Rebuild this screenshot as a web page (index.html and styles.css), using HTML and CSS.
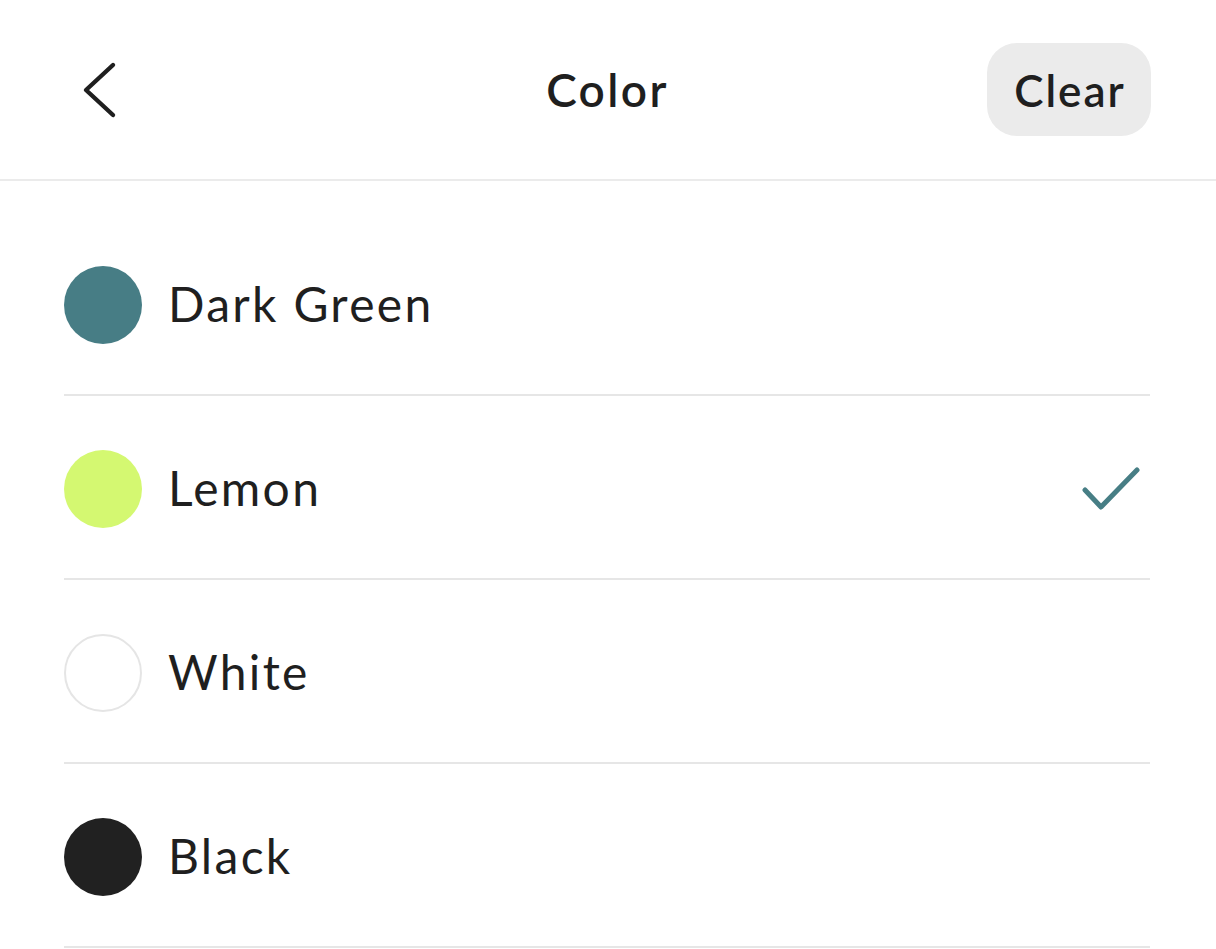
FILE: index.html
```html
<!DOCTYPE html>
<html lang="en">
<head>
<meta charset="utf-8">
<title>Color</title>
<link rel="stylesheet" href="styles.css">
</head>
<body>
<header class="topbar">
  <div class="topbar-left">
    <button class="back-btn" aria-label="Back">
      <svg class="back-icon" width="40" height="60" viewBox="0 0 40 60" fill="none">
        <path d="M33 5 L6 30 L33 55" stroke="#1f1f1f" stroke-width="4.4" stroke-linecap="round" stroke-linejoin="round"/>
      </svg>
    </button>
  </div>
  <h1 class="title">Color</h1>
  <div class="topbar-right">
    <button class="clear-btn">Clear</button>
  </div>
</header>
<main class="list">
  <div class="row">
    <span class="swatch swatch-darkgreen"></span>
    <span class="label">Dark Green</span>
  </div>
  <div class="row">
    <span class="swatch swatch-lemon"></span>
    <span class="label">Lemon</span>
    <svg class="check" width="60" height="44" viewBox="0 0 60 44" fill="none">
      <path d="M3 24 L19 41 L55 4" stroke="#477e85" stroke-width="5" stroke-linecap="round" stroke-linejoin="round"/>
    </svg>
  </div>
  <div class="row">
    <span class="swatch swatch-white"></span>
    <span class="label">White</span>
  </div>
  <div class="row">
    <span class="swatch swatch-black"></span>
    <span class="label">Black</span>
  </div>
</main>
</body>
</html>
```

FILE: styles.css
```css
html, body {
  margin: 0;
  padding: 0;
  background: #ffffff;
}

body {
  font-family: "Lato", "Noto Sans", sans-serif;
  color: #1f1f1f;
}

.topbar {
  display: grid;
  grid-template-columns: 1fr auto 1fr;
  align-items: center;
  height: 179px;
  padding: 0 65px 0 80px;
  border-bottom: 2px solid #ebebeb;
}

.topbar-left {
  display: flex;
  align-items: center;
}

.back-btn {
  border: 0;
  background: none;
  padding: 0;
  margin: 0;
  display: flex;
  cursor: pointer;
}

.back-icon {
  display: block;
}

.title {
  margin: 0;
  font-size: 46px;
  font-weight: 600;
  letter-spacing: 2.4px;
  color: #1f1f1f;
  position: relative;
  left: -8px;
}

.topbar-right {
  display: flex;
  justify-content: flex-end;
  align-items: center;
}

.clear-btn {
  border: 0;
  margin: 0;
  height: 93px;
  width: 164px;
  border-radius: 30px;
  background: #ebebeb;
  font-family: "Lato", "Noto Sans", sans-serif;
  font-size: 44px;
  font-weight: 600;
  letter-spacing: 2px;
  color: #1f1f1f;
  padding: 0 0 0 2px;
  cursor: pointer;
}

.list {
  padding: 31px 66px 0 64px;
}

.row {
  display: flex;
  align-items: center;
  height: 182px;
  border-bottom: 2px solid #e6e6e6;
}

.swatch {
  flex: none;
  width: 78px;
  height: 78px;
  border-radius: 50%;
  box-sizing: border-box;
  margin-right: 26px;
  position: relative;
  top: 2px;
}

.swatch-darkgreen { background: #477d85; }
.swatch-lemon { background: #d4f871; }
.swatch-white { background: #ffffff; border: 2px solid #e5e5e5; }
.swatch-black { background: #212121; }

.label {
  font-size: 48px;
  font-weight: 400;
  letter-spacing: 2.3px;
  color: #1f1f1f;
}

.check {
  display: block;
  margin-left: auto;
  margin-right: 8px;
  position: relative;
  top: 1px;
}
```
